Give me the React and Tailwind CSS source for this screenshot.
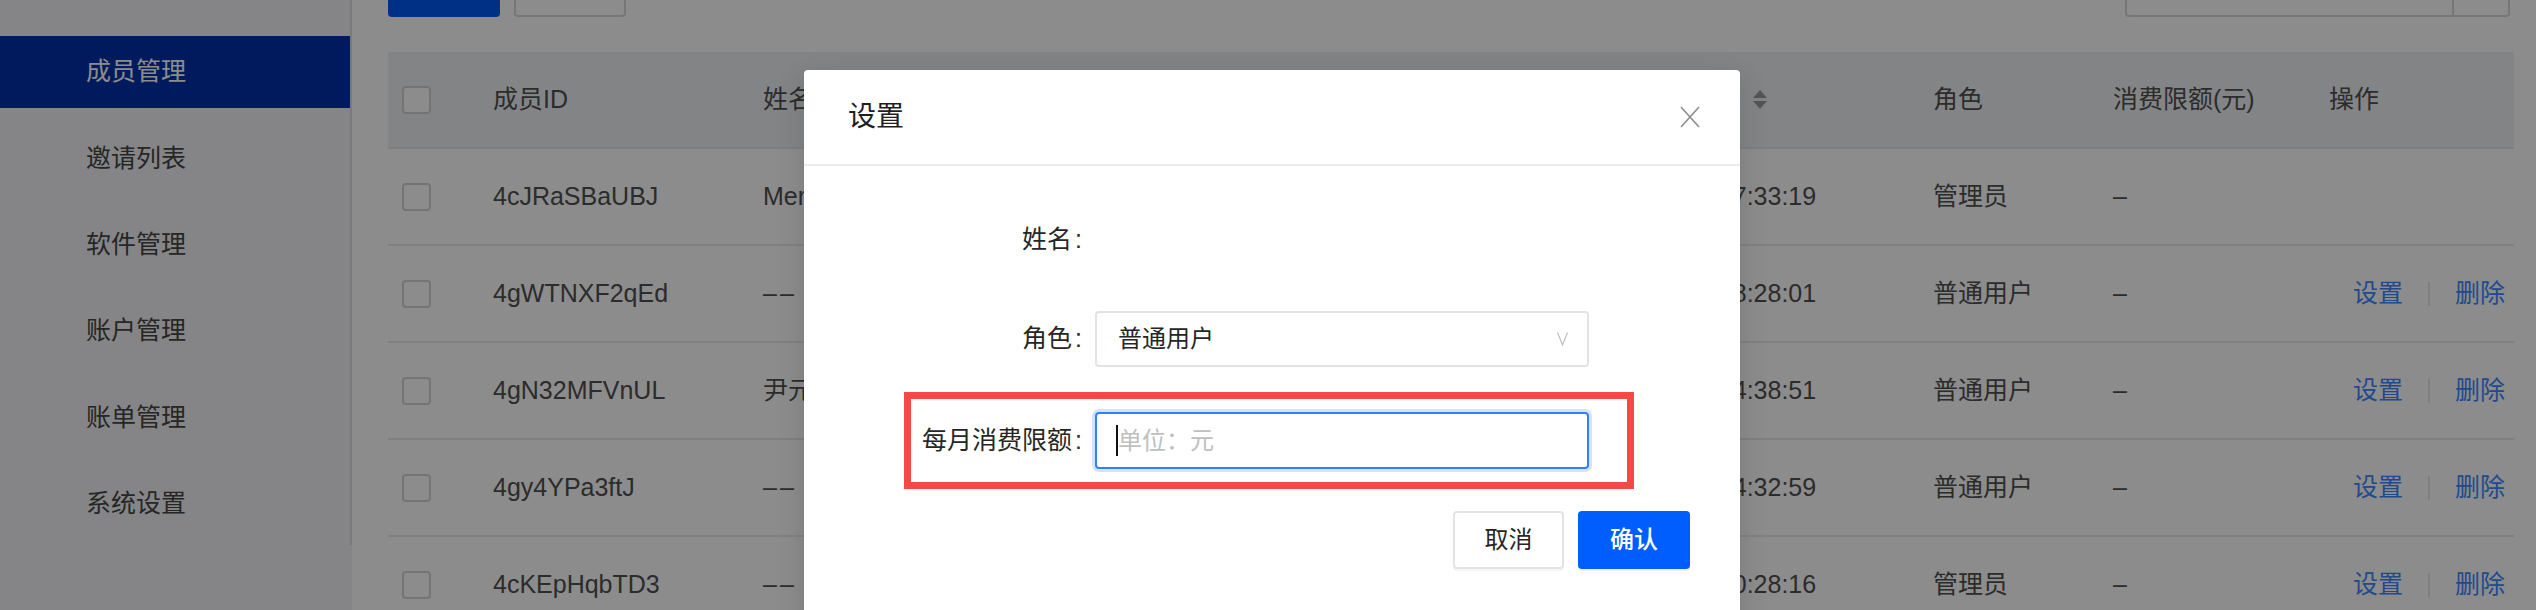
import React from "react";
import { Search } from "lucide-react";

const menu = ["成员管理", "邀请列表", "软件管理", "账户管理", "账单管理", "系统设置"];

const members = [
  { id: "4cJRaSBaUBJ", name: "Merlin", mail: "merlin@example.com", time: "2023-03-15 17:33:19", role: "管理员", self: true },
  { id: "4gWTNXF2qEd", name: "––", mail: "––", time: "2023-03-14 18:28:01", role: "普通用户" },
  { id: "4gN32MFVnUL", name: "尹元杰", mail: "yinyuanjie@example.com", time: "2023-03-14 14:38:51", role: "普通用户" },
  { id: "4gy4YPa3ftJ", name: "––", mail: "––", time: "2023-03-13 14:32:59", role: "普通用户" },
  { id: "4cKEpHqbTD3", name: "––", mail: "––", time: "2023-03-13 10:28:16", role: "管理员" },
];

const cols = "grid grid-cols-[89px_270px_350px_467px_353px_180px_216px_1fr]";

// empty values are shown as two spaced dashes
const Cell = ({ value }) => (
  <div className={value === "––" ? "pl-[16px] tracking-[3px]" : "pl-[16px]"}>{value}</div>
);

const Sidebar = () => (
  <aside className="w-[352px] shrink-0 bg-[#f2f3f6]">
    <nav className="flex h-[545px] flex-col gap-[14.4px] border-r-2 border-[#dcdfe4] pt-[36px]">
      {menu.map((item, index) => (
        <div
          key={item}
          className={
            index === 0
              ? "flex h-[72px] items-center bg-[#0030ab] pl-[86px] text-[25px] text-white"
              : "flex h-[72px] items-center pl-[86px] text-[25px] text-[#454545]"
          }
        >
          {item}
        </div>
      ))}
    </nav>
  </aside>
);

const Checkbox = () => (
  <span className="ml-[14px] block h-[28px] w-[29px] rounded-[4px] border-2 border-[#d4d4d4] bg-white" />
);

const SortArrows = () => (
  <svg width="14" height="19" viewBox="0 0 14 19" className="ml-[23px]">
    <path d="M7 0 L14 8 L0 8 Z" fill="#9a9a9a" />
    <path d="M0 11 L14 11 L7 19 Z" fill="#9a9a9a" />
  </svg>
);

const MemberTable = () => (
  <div className="mt-[35px] text-[25px] text-[#505050]">
    {/* header */}
    <div className={`${cols} h-[97px] items-center border-b-2 border-[#e3e5e9] bg-[#eef0f4]`}>
      <div><Checkbox /></div>
      <div className="pl-[16px]">成员ID</div>
      <div className="pl-[16px]">姓名</div>
      <div className="pl-[16px]">邮箱</div>
      <div className="flex items-center pl-[16px]">
        最近登录时间
        <SortArrows />
      </div>
      <div className="pl-[16px]">角色</div>
      <div className="pl-[16px]">消费限额(元)</div>
      <div className="pl-[16px]">操作</div>
    </div>

    {members.map((m) => (
      <div key={m.id} className={`${cols} h-[97px] items-center border-b-2 border-[#e9e9e9] bg-white`}>
        <div><Checkbox /></div>
        <div className="pl-[16px]">{m.id}</div>
        <Cell value={m.name} />
        <Cell value={m.mail} />
        <div className="pl-[20px]">{m.time}</div>
        <div className="pl-[16px]">{m.role}</div>
        <div className="pl-[16px]">–</div>
        <div className="flex items-center pl-[40px] text-[#3d87ff]">
          {!m.self && (
            <>
              <span>设置</span>
              <span className="mx-[25px] h-[24px] w-[2px] bg-[#e6e6e6]" />
              <span>删除</span>
            </>
          )}
        </div>
      </div>
    ))}
  </div>
);

const Main = () => (
  <main className="min-w-0 flex-1 pl-[36px] pr-[22px]">
    {/* toolbar, scrolled partly out of view */}
    <div className="-mt-[39px] flex items-start justify-between">
      <div className="flex gap-[14px]">
        <button className="h-[56px] w-[112px] rounded-[4px] bg-[#0058f5] text-[24px] text-white">邀请成员</button>
        <button className="h-[56px] w-[112px] rounded-[4px] border-2 border-[#d9d9d9] bg-white text-[24px] text-[#555]">
          批量删除
        </button>
      </div>
      <div className="mr-[4px] flex h-[56px] w-[385px] rounded-[4px] border-2 border-[#d9d9d9] bg-white">
        <div className="flex flex-1 items-center pl-[20px] text-[24px] text-[#bfbfbf]">请输入成员ID/姓名</div>
        <div className="flex w-[56px] items-center justify-center border-l-2 border-[#d9d9d9]">
          <Search size={22} color="#333" />
        </div>
      </div>
    </div>
    <MemberTable />
  </main>
);

const SettingsDialog = () => (
  <div className="absolute left-[804px] top-[70px] h-[600px] w-[936px] rounded-[4px] bg-white shadow-[0_6px_30px_rgba(0,0,0,0.12)]">
    <div className="flex h-[96px] items-center justify-between border-b-2 border-[#ececec] pl-[44px] pr-[40px]">
      <span className="text-[28px] text-[#1f1f1f]">设置</span>
      <svg width="20" height="22" viewBox="0 0 20 22">
        <path d="M1 1 L19 21 M19 1 L1 21" stroke="#8c8c8c" strokeWidth="1.6" fill="none" />
      </svg>
    </div>

    <div className="pl-[100px] pr-[50px] pt-[46px] text-[25px] text-[#262626]">
      <div className="flex h-[56px] items-center">
        <label className="w-[191px] pr-[13px] text-right">
          姓名<span className="ml-[3px]">:</span>
        </label>
      </div>

      <div className="mt-[43px] flex items-center">
        <label className="w-[191px] pr-[13px] text-right">
          角色<span className="ml-[3px]">:</span>
        </label>
        <div className="flex h-[56px] w-[494px] items-center justify-between rounded-[4px] border-2 border-[#e3e3e3] pl-[21px] pr-[19px]">
          <span className="text-[24px]">普通用户</span>
          <svg width="11" height="14" viewBox="0 0 11 14">
            <polyline points="0.5,0.5 5.5,13 10.5,0.5" stroke="#bdbdbd" strokeWidth="1.2" fill="none" />
          </svg>
        </div>
      </div>

      {/* highlighted row */}
      <div className="mt-[25px] flex w-fit items-center border-[7px] border-[#f44a47] py-[13px] pr-[38px]">
        <label className="w-[184px] pr-[13px] text-right">
          每月消费限额<span className="ml-[3px]">:</span>
        </label>
        <div className="flex h-[57px] w-[494px] items-center rounded-[4px] border-2 border-[#2f7fff] pl-[19px] shadow-[0_0_0_3px_#d4e4ff]">
          <span className="h-[31px] w-[2px] bg-[#111]" />
          <span className="text-[24px] text-[#bfbfbf]">单位：元</span>
        </div>
      </div>

      <div className="mt-[22px] flex justify-end gap-[14px]">
        <button className="h-[58px] w-[111px] rounded-[4px] border-2 border-[#e3e3e3] bg-white text-[24px] text-[#262626] shadow-[0_2px_0_rgba(0,0,0,0.03)]">
          取消
        </button>
        <button className="h-[58px] w-[112px] rounded-[4px] bg-[#005eff] text-[24px] font-medium text-white shadow-[0_2px_0_rgba(0,0,0,0.05)]">
          确认
        </button>
      </div>
    </div>
  </div>
);

export default function App() {
  return (
    <div className="relative h-[610px] w-full overflow-hidden bg-white font-['Liberation_Sans','Noto_Sans_CJK_SC',sans-serif]">
      <div className="flex h-full">
        <Sidebar />
        <Main />
      </div>
      {/* modal mask */}
      <div className="absolute inset-0 bg-black/45" />
      <SettingsDialog />
    </div>
  );
}
